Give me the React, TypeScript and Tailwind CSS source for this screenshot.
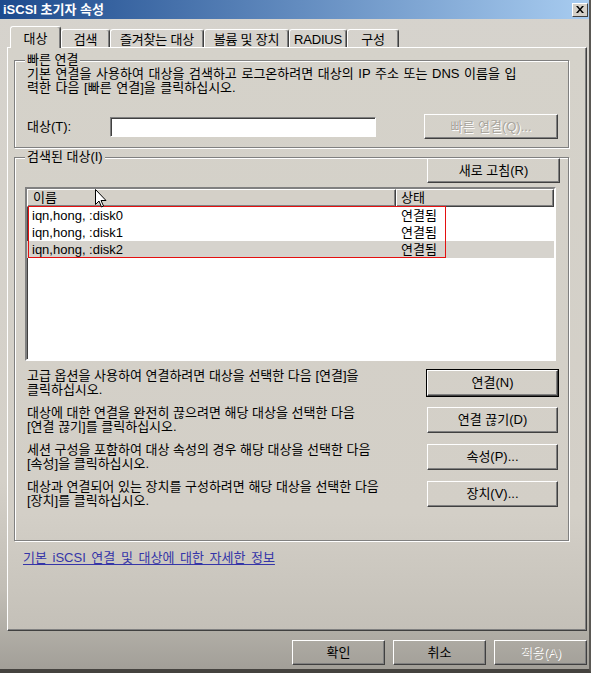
import type { ReactNode } from 'react'

function Button({
  children,
  className = '',
  disabled = false,
  primary = false,
}: {
  children: ReactNode
  className?: string
  disabled?: boolean
  primary?: boolean
}) {
  return (
    <button
      type="button"
      className={`flex items-center justify-center bg-transparent border border-t-white border-l-white border-r-[#404040] border-b-[#404040] ${
        primary ? 'shadow-[0_0_0_1px_#000,inset_-1px_-1px_0_#808080]' : 'shadow-[inset_-1px_-1px_0_#808080]'
      } ${disabled ? 'text-[#a9a59d] [text-shadow:1px_1px_0_#fff]' : 'text-black'} ${className}`}
    >
      {children}
    </button>
  )
}

const tabs = [
  { label: '대상', w: 'w-[51px]', active: true },
  { label: '검색', w: 'w-[49px]' },
  { label: '즐겨찾는 대상', w: 'w-[94px]' },
  { label: '볼륨 및 장치', w: 'w-[85px]' },
  { label: 'RADIUS', w: 'w-[58px]' },
  { label: '구성', w: 'w-[52px]' },
]

const targets = [
  { name: 'iqn,hong, :disk0', status: '연결됨' },
  { name: 'iqn,hong, :disk1', status: '연결됨' },
  { name: 'iqn,hong, :disk2', status: '연결됨', selected: true },
]

const actions = [
  { lines: ['고급 옵션을 사용하여 연결하려면 대상을 선택한 다음 [연결]을', '클릭하십시오.'], label: '연결(N)', primary: true },
  { lines: ['대상에 대한 연결을 완전히 끊으려면 해당 대상을 선택한 다음', '[연결 끊기]를 클릭하십시오.'], label: '연결 끊기(D)' },
  { lines: ['세션 구성을 포함하여 대상 속성의 경우 해당 대상을 선택한 다음', '[속성]을 클릭하십시오.'], label: '속성(P)...' },
  { lines: ['대상과 연결되어 있는 장치를 구성하려면 해당 대상을 선택한 다음', '[장치]를 클릭하십시오.'], label: '장치(V)...' },
]

export default function App() {
  return (
    <div className="relative w-[591px] h-[673px] overflow-hidden flex flex-col border-b-[4px] border-b-[#45433f] border-r-[2px] border-r-[#5a5854] bg-[linear-gradient(to_bottom,#d6d3cd_0%,#d4d0c8_72%,#c2beb6_88%,#a29f98_100%)] font-['Liberation_Sans','Noto_Sans_CJK_KR',sans-serif] text-[13px] leading-[14px] text-black">
      {/* title bar */}
      <div className="h-[19px] flex items-center justify-between pl-[3px] pr-[1px] bg-[linear-gradient(to_right,#1c4a8d,#a8ccf0)]">
        <span className="font-bold text-white text-[13px]">iSCSI 초기자 속성</span>
        <div className="w-[16px] h-[14px] flex items-center justify-center bg-[#d4d0c8] border border-t-white border-l-white border-r-[#404040] border-b-[#404040]">
          <svg width="8" height="7" viewBox="0 0 8 7">
            <path d="M0 0h2l2 2.5L6 0h2L5 3.5 8 7H6L4 4.5 2 7H0l3-3.5z" fill="#000" />
          </svg>
        </div>
      </div>

      {/* tabs */}
      <div className="mt-[7px] h-[22px] pl-[10px] flex items-end">
        {tabs.map((t) =>
          t.active ? (
            <div
              key={t.label}
              className={`relative z-10 ${t.w} h-[22px] pt-[5px] flex justify-center bg-[#d5d2ca] border-t border-l border-r border-t-white border-l-white border-r-[#404040] rounded-t-[3px] shadow-[inset_-1px_0_0_#808080]`}
            >
              {t.label}
            </div>
          ) : (
            <div
              key={t.label}
              className={`${t.w} h-[19px] pt-[3px] flex justify-center tracking-[-0.2px] border-t border-l border-r border-t-white border-l-white border-r-[#404040] rounded-t-[3px] shadow-[inset_-1px_0_0_#808080]`}
            >
              {t.label}
            </div>
          ),
        )}
      </div>

      {/* tab pane */}
      <div className="-mt-[1px] ml-[7px] w-[580px] h-[584px] pl-[6px] bg-[linear-gradient(to_bottom,#d5d2ca_0%,#d3cfc7_80%,#c4c0b8_100%)] border border-t-white border-l-white border-r-[#404040] border-b-[#404040] shadow-[inset_-1px_-1px_0_#808080]">
        {/* quick connect */}
        <fieldset className="mt-[5px] w-[555px] border border-[#808080] shadow-[1px_1px_0_#fff,inset_1px_1px_0_#fff] pl-[12px] pb-[8px]">
          <legend className="ml-[-2px] px-[2px] bg-[#d5d2ca] leading-[14px]">빠른 연결</legend>
          <p className="[word-spacing:1px]">
            기본 연결을 사용하여 대상을 검색하고 로그온하려면 대상의 IP 주소 또는 DNS 이름을 입
            <br />
            력한 다음 [빠른 연결]을 클릭하십시오.
          </p>
          <div className="mt-[19px] h-[25px] flex items-center">
            <span className="w-[83px]">대상(T):</span>
            <div className="w-[266px] h-[20px] bg-white border border-t-[#808080] border-l-[#808080] border-r-white border-b-white shadow-[inset_1px_1px_0_#404040]" />
            <Button disabled className="ml-[48px] w-[134px] h-[25px]">
              빠른 연결(Q)...
            </Button>
          </div>
        </fieldset>

        {/* discovered targets */}
        <fieldset className="mt-[2px] w-[555px] border border-[#808080] shadow-[1px_1px_0_#fff,inset_1px_1px_0_#fff] pl-[10px] pb-[32px]">
          <legend className="ml-[0px] px-[2px] bg-[#d5d2ca] leading-[14px]">검색된 대상(I)</legend>
          <div className="-mt-[6px] flex justify-end pr-[8px]">
            <Button className="w-[133px] h-[25px]">새로 고침(R)</Button>
          </div>

          <div className="relative mt-[4px] w-[531px] h-[174px] bg-white border-2 border-t-[#808080] border-l-[#808080] border-r-white border-b-white shadow-[inset_1px_1px_0_#404040]">
            <div className="flex h-[18px]">
              <div className="w-[369px] pl-[5px] flex items-center bg-[#d4d0c8] border border-t-white border-l-white border-r-[#404040] border-b-[#404040] shadow-[inset_-1px_-1px_0_#808080]">
                이름
              </div>
              <div className="w-[158px] pl-[4px] flex items-center bg-[#d4d0c8] border border-t-white border-l-white border-r-[#404040] border-b-[#404040] shadow-[inset_-1px_-1px_0_#808080]">
                상태
              </div>
            </div>
            {targets.map((r) => (
              <div key={r.name} className={`flex h-[17px] items-center ${r.selected ? 'bg-[#d6d3cd]' : ''}`}>
                <span className="w-[369px] pl-[5px]">{r.name}</span>
                <span className="pl-[5px]">{r.status}</span>
              </div>
            ))}
            {/* annotation box */}
            <div className="absolute left-[1px] top-[17px] w-[418px] h-[52px] border border-[#e41010]" />
          </div>

          <div className="mt-[8px] flex flex-col gap-[9px]">
            {actions.map((a) => (
              <div key={a.label} className="h-[28px] flex items-center justify-between pr-[10px]">
                <p className="pl-[2px]">
                  {a.lines[0]}
                  <br />
                  {a.lines[1]}
                </p>
                <Button primary={a.primary} className="w-[131px] h-[26px]">
                  {a.label}
                </Button>
              </div>
            ))}
          </div>
        </fieldset>

        <a className="mt-[10px] ml-[9px] inline-block text-[#3535a8] underline underline-offset-[2px] [word-spacing:2px]">
          기본 iSCSI 연결 및 대상에 대한 자세한 정보
        </a>
      </div>

      {/* dialog buttons */}
      <div className="mt-[9px] flex justify-end gap-[8px] pr-[2px]">
        <Button className="w-[93px] h-[25px]">확인</Button>
        <Button className="w-[93px] h-[25px]">취소</Button>
        <Button disabled className="w-[93px] h-[25px]">
          적용(A)
        </Button>
      </div>

      {/* mouse pointer */}
      <svg className="absolute left-[95px] top-[189px]" width="12" height="19" viewBox="0 0 12 19">
        <path d="M0.5 0.5v15l3.5-3.5 2.5 6 2-1-2.5-5.5h5z" fill="#fff" stroke="#000" strokeWidth="1" />
      </svg>
    </div>
  )
}
